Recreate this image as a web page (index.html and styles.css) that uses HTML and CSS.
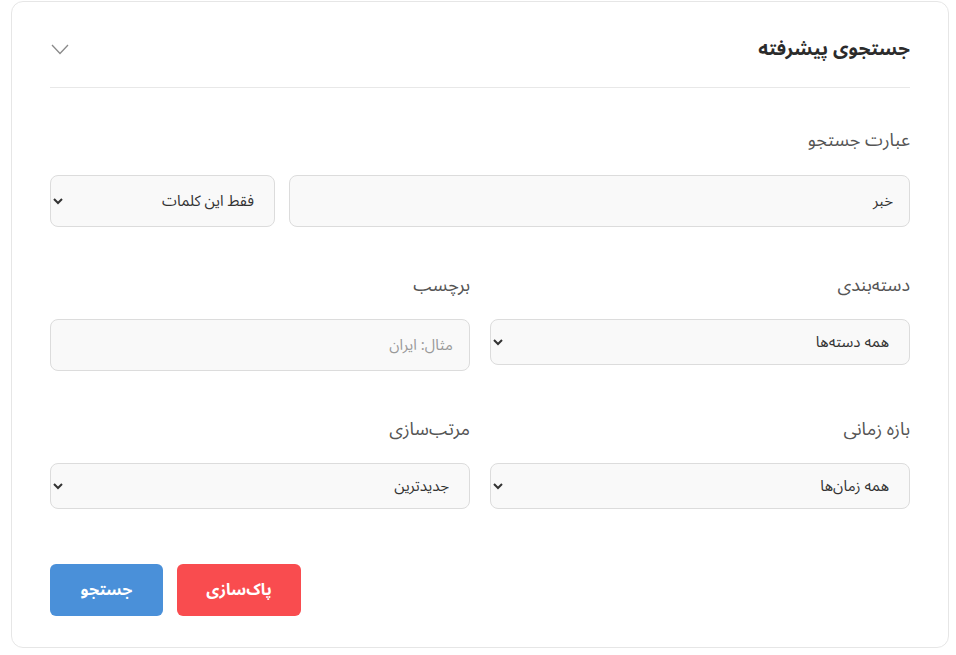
FILE: index.html
```html
<!DOCTYPE html>
<html lang="fa" dir="rtl">
<head>
<meta charset="utf-8">
<link rel="stylesheet" href="styles.css">
</head>
<body>
<section class="card">
  <header class="card-head">
    <h2 class="title">جستجوی پیشرفته</h2>
    <svg class="toggle" width="18" height="11" viewBox="0 0 18 11"><polyline points="1,1 9,9.5 17,1" fill="none" stroke="#8a8a8a" stroke-width="1.3"/></svg>
  </header>
  <form class="form">
    <div class="field">
      <label class="label">عبارت جستجو</label>
      <div class="query-row">
        <input class="control tall grow" type="text" value="خبر">
        <select class="control tall mode">
          <option>فقط این کلمات</option>
        </select>
      </div>
    </div>
    <div class="grid">
      <div class="field">
        <label class="label">دسته‌بندی</label>
        <select class="control"><option>همه دسته‌ها</option></select>
      </div>
      <div class="field">
        <label class="label">برچسب</label>
        <input class="control tall" type="text" placeholder="مثال: ایران">
      </div>
    </div>
    <div class="grid">
      <div class="field">
        <label class="label">بازه زمانی</label>
        <select class="control"><option>همه زمان‌ها</option></select>
      </div>
      <div class="field">
        <label class="label">مرتب‌سازی</label>
        <select class="control"><option>جدیدترین</option></select>
      </div>
    </div>
    <div class="actions">
      <button type="button" class="btn btn-clear">پاک‌سازی</button>
      <button type="button" class="btn btn-search">جستجو</button>
    </div>
  </form>
</section>
</body>
</html>
```
FILE: styles.css
```css
* { box-sizing: border-box; }
html, body { background: #ffffff; }
body {
  margin: 1px 7px 0 11px;
  font-family: "Noto Sans Arabic", "DejaVu Sans", "Noto Sans", sans-serif;
  color: #333;
}
.card {
  border: 1px solid #e6e6e6;
  border-radius: 12px;
  padding: 24px 38px 31px 38px;
  background: #fff;
}
.card-head {
  display: flex;
  align-items: center;
  justify-content: space-between;
  height: 62px;
  padding-bottom: 15px;
  border-bottom: 1px solid #e8e8e8;
}
.title {
  margin: 0;
  font-size: 19px;
  font-weight: 700;
  color: #2b2b2b;
}
.toggle { display: block; margin-left: 1px; }
.form { padding-top: 40px; }
.field { display: flex; flex-direction: column; min-width: 0; }
.label {
  font-size: 18px;
  line-height: 24px;
  height: 24px;
  color: #555;
  font-weight: 400;
  margin-bottom: 23px;
}
.control {
  width: 100%;
  height: 46px;
  border: 1px solid #dcdcdc;
  border-radius: 8px;
  background-color: #f9f9f9;
  font-family: inherit;
  font-size: 15px;
  color: #333;
  padding: 0 16px;
  outline: none;
}
.control.tall { height: 52px; }
.control::placeholder { color: #999; }
.query-row { display: flex; gap: 14px; }
.query-row .grow { flex: 1 1 auto; width: auto; min-width: 0; }
.query-row .mode { width: 225px; flex: none; }
.grid {
  display: grid;
  grid-template-columns: minmax(0, 1fr) minmax(0, 1fr);
  column-gap: 20px;
  margin-top: 46px;
  align-items: start;
}
.grid .label { margin-bottom: 22px; }
.actions {
  display: flex;
  justify-content: flex-end;
  gap: 14px;
  margin-top: 55px;
}
.btn {
  height: 52px;
  border: none;
  border-radius: 6px;
  color: #fff;
  font-family: inherit;
  font-size: 16px;
  font-weight: 700;
}
.btn-clear { background: #f94c4f; width: 124px; }
.btn-search { background: #4a90d9; width: 113px; }
```
